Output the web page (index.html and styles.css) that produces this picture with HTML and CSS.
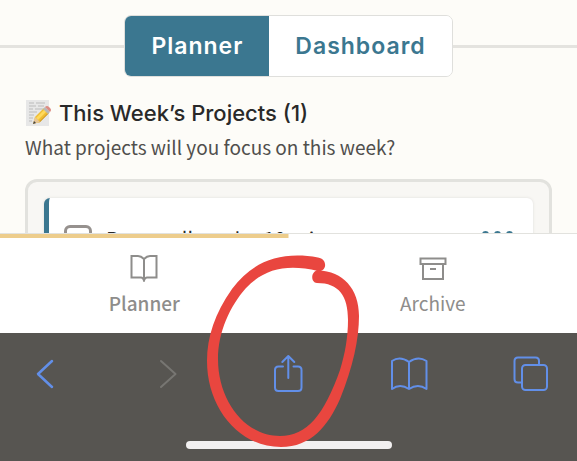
FILE: index.html
```html
<!DOCTYPE html>
<html lang="en">
<head>
<meta charset="utf-8">
<title>Planner</title>
<meta name="viewport" content="width=device-width, initial-scale=1">
<link rel="stylesheet" href="styles.css">
</head>
<body>
<main class="page">
  <div class="switcher">
    <div class="tabs">
      <button class="tab tab-active" type="button">Planner</button>
      <button class="tab" type="button">Dashboard</button>
    </div>
  </div>
  <section class="projects">
    <h1 class="heading">
      <svg class="memo" viewBox="0 0 26 28" aria-hidden="true">
        <path d="M1 1h23v26H1z" fill="#e7e7e7"/>
        <path d="M4 4h5m2 0h9M4 7h7m2 0h6M4 10h4m2 0h8M4 13h8M4 16h5M4 19h4M4 22h3" stroke="#bbb" stroke-width="1" fill="none"/>
        <path d="M8 25l2-7L19 9l5 5-9 9z" fill="#efbd32"/>
        <path d="M11 19L20 10l2 2-9 9z" fill="#ffd95c"/>
        <path d="M13 24L22 15l2-1-9 9z" fill="#c58b25"/>
        <path d="M8 25l2-7 5 5z" fill="#e7c695"/>
        <path d="M8 25l1-3 2 2z" fill="#444"/>
        <path d="M18 10l2-2 5 5-2 2z" fill="#b7b8b8"/>
        <path d="M20 8q2-2 4 0l1 1q2 2 0 4z" fill="#dc8c83"/>
      </svg>
      <span>This Week’s Projects (1)</span>
    </h1>
    <p class="lead">What projects will you focus on this week?</p>
    <div class="list">
      <article class="card">
        <input class="check" type="checkbox" id="project">
        <label class="name" for="project">Personally order 10 min</label>
        <button class="more" type="button" aria-label="More options"><i></i><i></i><i></i></button>
      </article>
    </div>
  </section>
</main>
<nav class="nav">
  <a class="nav-item nav-current" href="#planner">
    <svg class="nav-icon" viewBox="0 0 28 28"><path d="M14 5C12 3 10 2 8 2H1.500v21.500H11q2 0 3 3 1-3 3-3h9.500V2H20c-2 0-4 1-6 3v21"/></svg>
    <span>Planner</span>
  </a>
  <a class="nav-item" href="#archive">
    <svg class="nav-icon" viewBox="0 0 28 28"><path d="M1.500 4.500h25V10h-25zM4 10v15h20V10M11 15h6"/></svg>
    <span>Archive</span>
  </a>
</nav>
<footer class="browser">
  <div class="tools">
    <button class="tool" type="button" aria-label="Back"><svg viewBox="0 0 36 36"><path d="M25 5L11 18l14 13" stroke-width="2.500"/></svg></button>
    <button class="tool tool-off" type="button" aria-label="Forward" disabled><svg viewBox="0 0 36 36"><path d="M12 5L26.500 18 12 31"/></svg></button>
    <button class="tool" type="button" aria-label="Share"><svg viewBox="0 0 36 36"><path d="M12 10.500H7.500q-3.500 0-3.500 3.500v17.500q0 3.500 3.500 3.500h19.500q3.500 0 3.500-3.500V14q0-3.500-3.500-3.500H22.500M17.300 22V0M11.300 6l6-6 6 6"/></svg></button>
    <button class="tool" type="button" aria-label="Bookmarks"><svg viewBox="0 0 36 36"><path d="M17 6Q8-.5 0 5v28q8-6 17 0 9-6 17.500 0V5Q26-.5 17 6v27"/></svg></button>
    <button class="tool" type="button" aria-label="Tabs"><svg viewBox="0 0 36 36"><path d="M8 26.500H4q-3.500 0-3.500-3.500V5q0-3.500 3.500-3.500H21.500q3.500 0 3.500 3.500v4"/><rect x="8" y="9" width="25" height="25" rx="3.500"/></svg></button>
  </div>
  <div class="home"></div>
</footer>
<svg class="mark" viewBox="0 0 160 196" aria-hidden="true">
  <path d="M115 5.500C78-1 50 9 29 37 12 61 4 85 4 109c0 46 31 86 74 86 30 0 47-21 59-48 13-32 19-60 19-83 0-27-16-45-41-45.500-7 0-8 12-1 12.500 22 0 31 13 31 37 0 17-3 34-8 50-16 45-33 66-60 66-35 0-62-35-62-77 0-27 12-53 28-71 19-20 42-24 72-17 9 1 10-12 0-13.500z"/>
</svg>
</body>
</html>
```
FILE: styles.css
```css
* { box-sizing: border-box; }
body {
  position: relative;
  margin: 0;
  height: 100vh;
  display: flex;
  flex-direction: column;
  overflow: hidden;
  background: #fdfcf8;
  color: #292929;
  font-family: "Noto Sans CJK SC", "Noto Sans", sans-serif;
}
button { font: inherit; }
.page { flex: 1; min-height: 0; overflow: hidden; padding-top: 15px; }
.switcher { display: flex; align-items: center; }
.switcher::before, .switcher::after { content: ""; flex: 1; height: 3px; background: #e4e3df; }
.tabs {
  display: flex;
  border: 1px solid #dfdfdc;
  border-radius: 7px;
  overflow: hidden;
  background: #fff;
}
.tab {
  height: 60px;
  padding: 0 26px;
  border: 0;
  background: #fff;
  color: #3b7790;
  font-family: Inter, sans-serif;
  font-size: 23px;
  font-weight: 600;
  letter-spacing: 1px;
}
.tab-active { background: #3b7790; color: #fff; }
.projects { padding: 20px 25px 0; }
.heading {
  display: flex;
  align-items: center;
  gap: 8px;
  margin: 0;
  font-family: Inter, sans-serif;
  font-size: 22px;
  font-weight: 500;
  line-height: 32px;
}
.memo { width: 26px; height: 28px; }
.lead { margin: 2px 0 16px; font-size: 19px; line-height: 32px; color: #504f4d; }
.list {
  height: 120px;
  padding: 16px;
  border: 3px solid #e2e2de;
  border-radius: 12px;
  background: #f8f7f4;
}
.card {
  display: flex;
  align-items: center;
  height: 82px;
  padding: 0 20px 0 15px;
  border-left: 5px solid #3b7790;
  border-radius: 6px;
  background: #fff;
  box-shadow: 0 0 3px #deddda;
}
.check {
  appearance: none;
  width: 28px;
  height: 28px;
  margin: 0 14px 0 0;
  border: 3px solid #96918e;
  border-radius: 6px;
}
.name { flex: 1; font-size: 20px; line-height: 28px; }
.more { display: flex; gap: 5px; padding: 0 0 10px; border: 0; background: none; }
.more i { width: 7px; height: 7px; border-radius: 50%; background: #3b7790; }
.nav {
  display: flex;
  height: 100px;
  border-top: 1px solid #e2e2de;
  background: linear-gradient(#edcd8c, #edcd8c) 0 0 / 50% 4px no-repeat #fff;
}
.nav-item {
  flex: 1;
  display: flex;
  flex-direction: column;
  align-items: center;
  gap: 6px;
  padding-top: 20px;
  color: #8e8d8b;
  font-size: 19px;
  line-height: 30px;
  text-decoration: none;
}
.nav-current { font-weight: 500; }
.nav-icon { width: 28px; height: 28px; fill: none; stroke: currentColor; stroke-width: 2; }
.browser { height: 128px; padding-top: 23px; background: #575551; }
.tools { display: flex; justify-content: space-between; padding: 0 27px; }
.tool { width: 36px; height: 36px; padding: 0; border: 0; background: none; color: #628fe8; }
.tool svg { display: block; width: 36px; height: 36px; overflow: visible; fill: none; stroke: currentColor; stroke-width: 2; stroke-linecap: round; stroke-linejoin: round; }
.tool-off { color: #777672; }
.home { width: 206px; height: 8px; margin: 49px auto 0; border-radius: 4px; background: #f2f0f0; }
.mark { position: absolute; left: 203px; top: 252px; width: 160px; height: 196px; fill: #e9463f; pointer-events: none; }
```
